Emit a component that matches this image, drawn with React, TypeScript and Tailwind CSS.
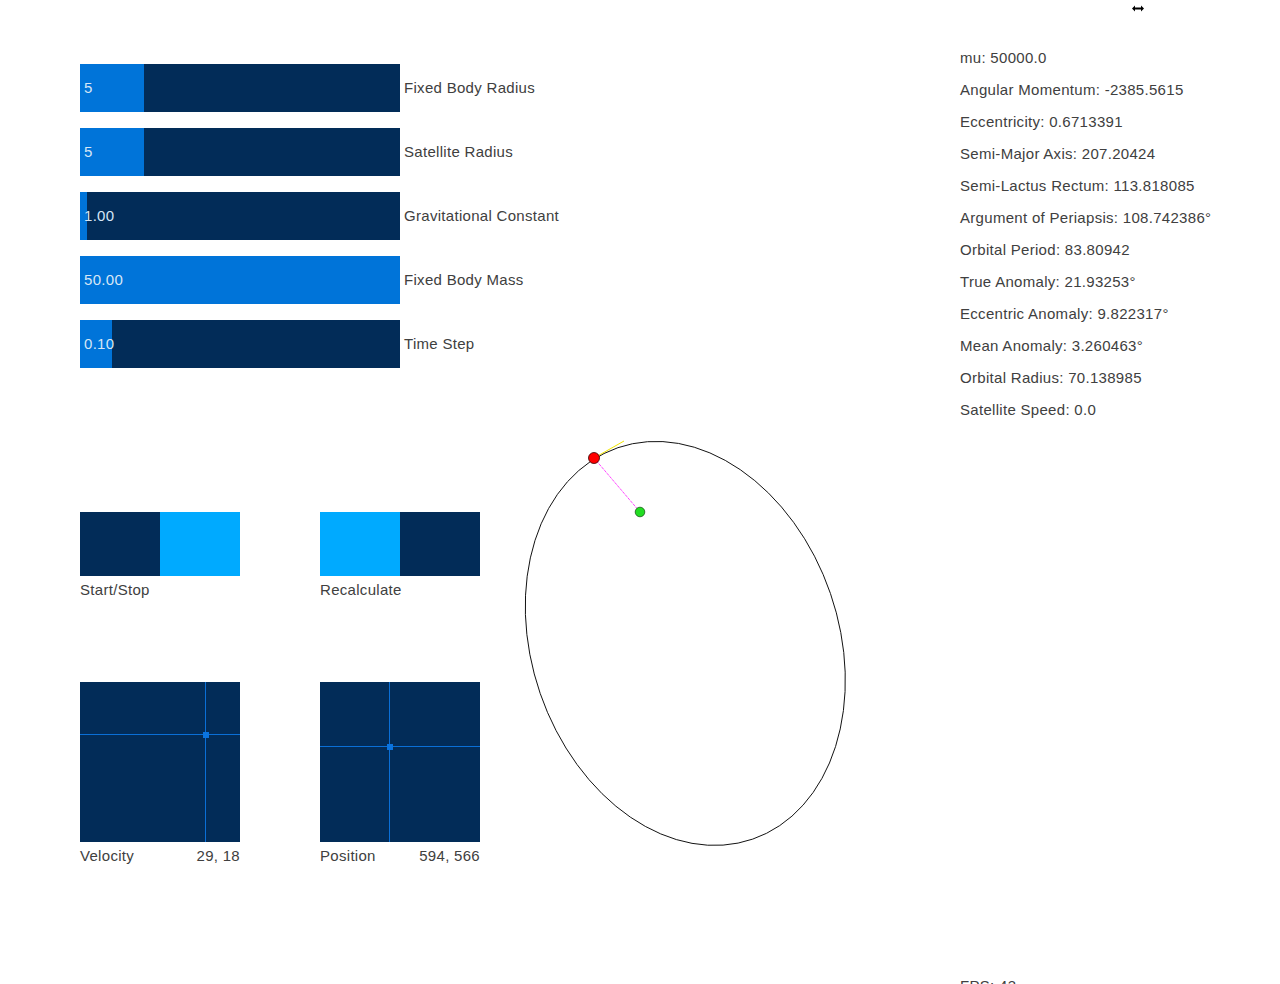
import React from "react";

const sliders = [
  { value: "5", label: "Fixed Body Radius", fill: 64 },
  { value: "5", label: "Satellite Radius", fill: 64 },
  { value: "1.00", label: "Gravitational Constant", fill: 7 },
  { value: "50.00", label: "Fixed Body Mass", fill: 320 },
  { value: "0.10", label: "Time Step", fill: 32 },
];

const stats = [
  "mu: 50000.0",
  "Angular Momentum: -2385.5615",
  "Eccentricity: 0.6713391",
  "Semi-Major Axis: 207.20424",
  "Semi-Lactus Rectum: 113.818085",
  "Argument of Periapsis: 108.742386°",
  "Orbital Period: 83.80942",
  "True Anomaly: 21.93253°",
  "Eccentric Anomaly: 9.822317°",
  "Mean Anomaly: 3.260463°",
  "Orbital Radius: 70.138985",
  "Satellite Speed: 0.0",
];

const font = { fontFamily: '"Liberation Sans", Arial, sans-serif' };

function Slider({ value, label, fill }: { value: string; label: string; fill: number }) {
  return (
    <div className="flex items-center h-[48px] whitespace-nowrap">
      <div className="relative shrink-0 w-[320px] h-[48px] bg-[#022c58] flex items-center">
        <div className="absolute left-0 top-0 h-full bg-[#0074d9]" style={{ width: fill }} />
        <span className="relative pl-[4px] text-[15px] tracking-[0.3px] text-[#d6e6f6]">{value}</span>
      </div>
      <span className="pl-[4px] text-[15px] tracking-[0.3px] text-[#404040]">{label}</span>
    </div>
  );
}

function Toggle({ label, on }: { label: string; on: "left" | "right" }) {
  return (
    <div className="flex flex-col w-[160px]">
      <div className="flex h-[64px]">
        <div className={`w-[80px] ${on === "left" ? "bg-[#00aaff]" : "bg-[#022c58]"}`} />
        <div className={`w-[80px] ${on === "right" ? "bg-[#00aaff]" : "bg-[#022c58]"}`} />
      </div>
      <span className="mt-[5px] text-[15px] leading-[18px] tracking-[0.3px] text-[#404040]">{label}</span>
    </div>
  );
}

function Pad({ label, value, x, y }: { label: string; value: string; x: number; y: number }) {
  return (
    <div className="flex flex-col w-[160px]">
      <div className="relative w-[160px] h-[160px] bg-[#022c58] overflow-hidden">
        <div className="absolute top-0 h-full w-px bg-[#0a6fd6]" style={{ left: x }} />
        <div className="absolute left-0 w-full h-px bg-[#0a6fd6]" style={{ top: y }} />
        <div className="absolute w-[6px] h-[6px] bg-[#0a74e0]" style={{ left: x - 2.5, top: y - 2.5 }} />
      </div>
      <div className="mt-[5px] flex justify-between text-[15px] leading-[18px] tracking-[0.3px] text-[#404040]">
        <span>{label}</span>
        <span>{value}</span>
      </div>
    </div>
  );
}

export default function App() {
  return (
    <div className="w-[1280px] h-[984px] bg-white flex overflow-hidden" style={font}>
      {/* controls */}
      <div className="w-[500px] shrink-0 pl-[80px] pt-[64px] flex flex-col">
        <div className="flex flex-col gap-4">
          {sliders.map((s, i) => (
            <Slider key={i} {...s} />
          ))}
        </div>
        <div className="mt-[144px] flex gap-[80px]">
          <Toggle label="Start/Stop" on="right" />
          <Toggle label="Recalculate" on="left" />
        </div>
        <div className="mt-[83px] flex gap-[80px]">
          <Pad label="Velocity" value="29, 18" x={125} y={52} />
          <Pad label="Position" value="594, 566" x={69} y={64} />
        </div>
      </div>

      {/* orbit view */}
      <svg width="460" height="984" viewBox="500 0 460 984" className="shrink-0">
        <ellipse
          cx="685.3"
          cy="643.4"
          rx="207"
          ry="153.5"
          transform="rotate(71 685.3 643.4)"
          fill="none"
          stroke="#111"
          strokeWidth="0.9"
        />
        <line x1="594" y1="458" x2="624" y2="441" stroke="#f2e600" strokeWidth="1" />
        <line x1="594" y1="458" x2="640" y2="512" stroke="#ff44ff" strokeWidth="1" strokeDasharray="3 1" />
        <circle cx="640" cy="512" r="4.8" fill="#22dd22" stroke="#1a5a1a" strokeWidth="0.8" />
        <circle cx="594" cy="458" r="5.5" fill="#ff0000" stroke="#330000" strokeWidth="0.8" />
      </svg>

      {/* readouts */}
      <div className="relative w-[320px] shrink-0 pt-[42px] flex flex-col text-[15px] leading-[32px] tracking-[0.3px] text-[#404040] whitespace-nowrap">
        <svg className="absolute left-[172px] top-[5px]" width="12" height="7" viewBox="0 0 12 7">
          <path d="M0 3.5 L3 0.5 L3 2.5 L9 2.5 L9 0.5 L12 3.5 L9 6.5 L9 4.5 L3 4.5 L3 6.5 Z" fill="#000" />
        </svg>
        {stats.map((s, i) => (
          <span key={i}>{s}</span>
        ))}
        <span className="mt-[544px]">FPS: 43</span>
      </div>
    </div>
  );
}
